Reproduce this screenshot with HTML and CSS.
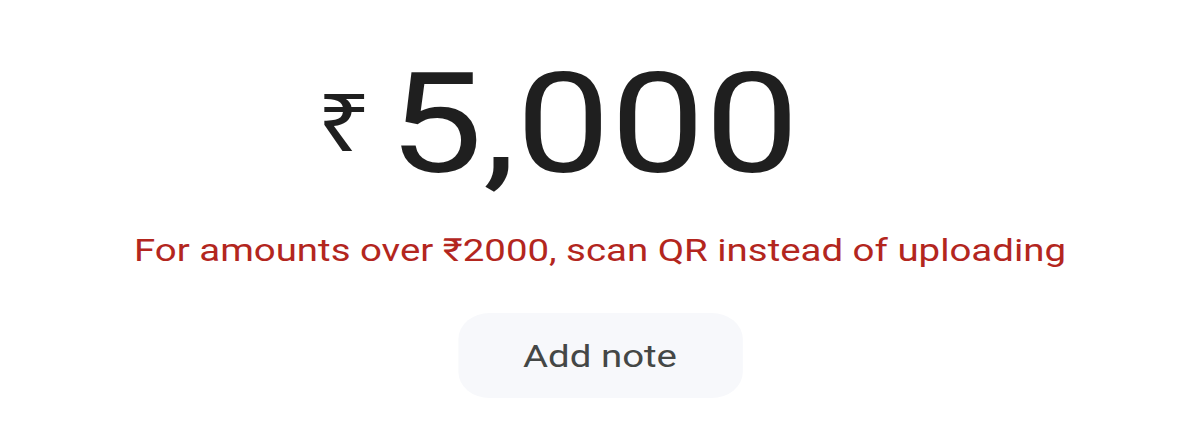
FILE: index.html
```html
<!DOCTYPE html>
<html>
<head>
<meta charset="utf-8">
<link rel="stylesheet" href="styles.css">
</head>
<body>
<main class="page">
  <div class="amount">
    <span class="currency">₹</span>
    <span class="value">5,000</span>
  </div>
  <p class="warning">For amounts over ₹2000, scan QR instead of uploading</p>
  <button class="note-btn" type="button">Add note</button>
</main>
</body>
</html>
```

FILE: styles.css
```css
html, body {
  margin: 0;
  padding: 0;
  background: #ffffff;
}

body {
  overflow: hidden;
}

.page {
  width: 1000px;
  margin: 0 auto;
  display: flex;
  flex-direction: column;
  align-items: center;
  padding-top: 44px;
  transform: scaleX(1.2);
  transform-origin: 50% 0;
}

.amount {
  display: flex;
  align-items: flex-start;
  gap: 14px;
  padding-right: 70px;
  color: #1f1f1f;
  font-family: Roboto, "Liberation Sans", sans-serif;
}

.currency {
  font-family: "Noto Sans", "DejaVu Sans", sans-serif;
  font-size: 80px;
  line-height: 1;
  margin-top: 36px;
}

.value {
  font-size: 140px;
  line-height: 160px;
  font-weight: 400;
}

.warning {
  margin: 26px 0 0;
  color: #b3261e;
  font-family: Roboto, "Liberation Sans", sans-serif;
  font-size: 32px;
  line-height: 40px;
}

.note-btn {
  margin-top: 43px;
  width: 237px;
  height: 85px;
  border: none;
  border-radius: 26px;
  background: #f7f8fb;
  color: #444746;
  font-family: Roboto, "Liberation Sans", sans-serif;
  font-size: 32px;
  padding: 0;
}
```
